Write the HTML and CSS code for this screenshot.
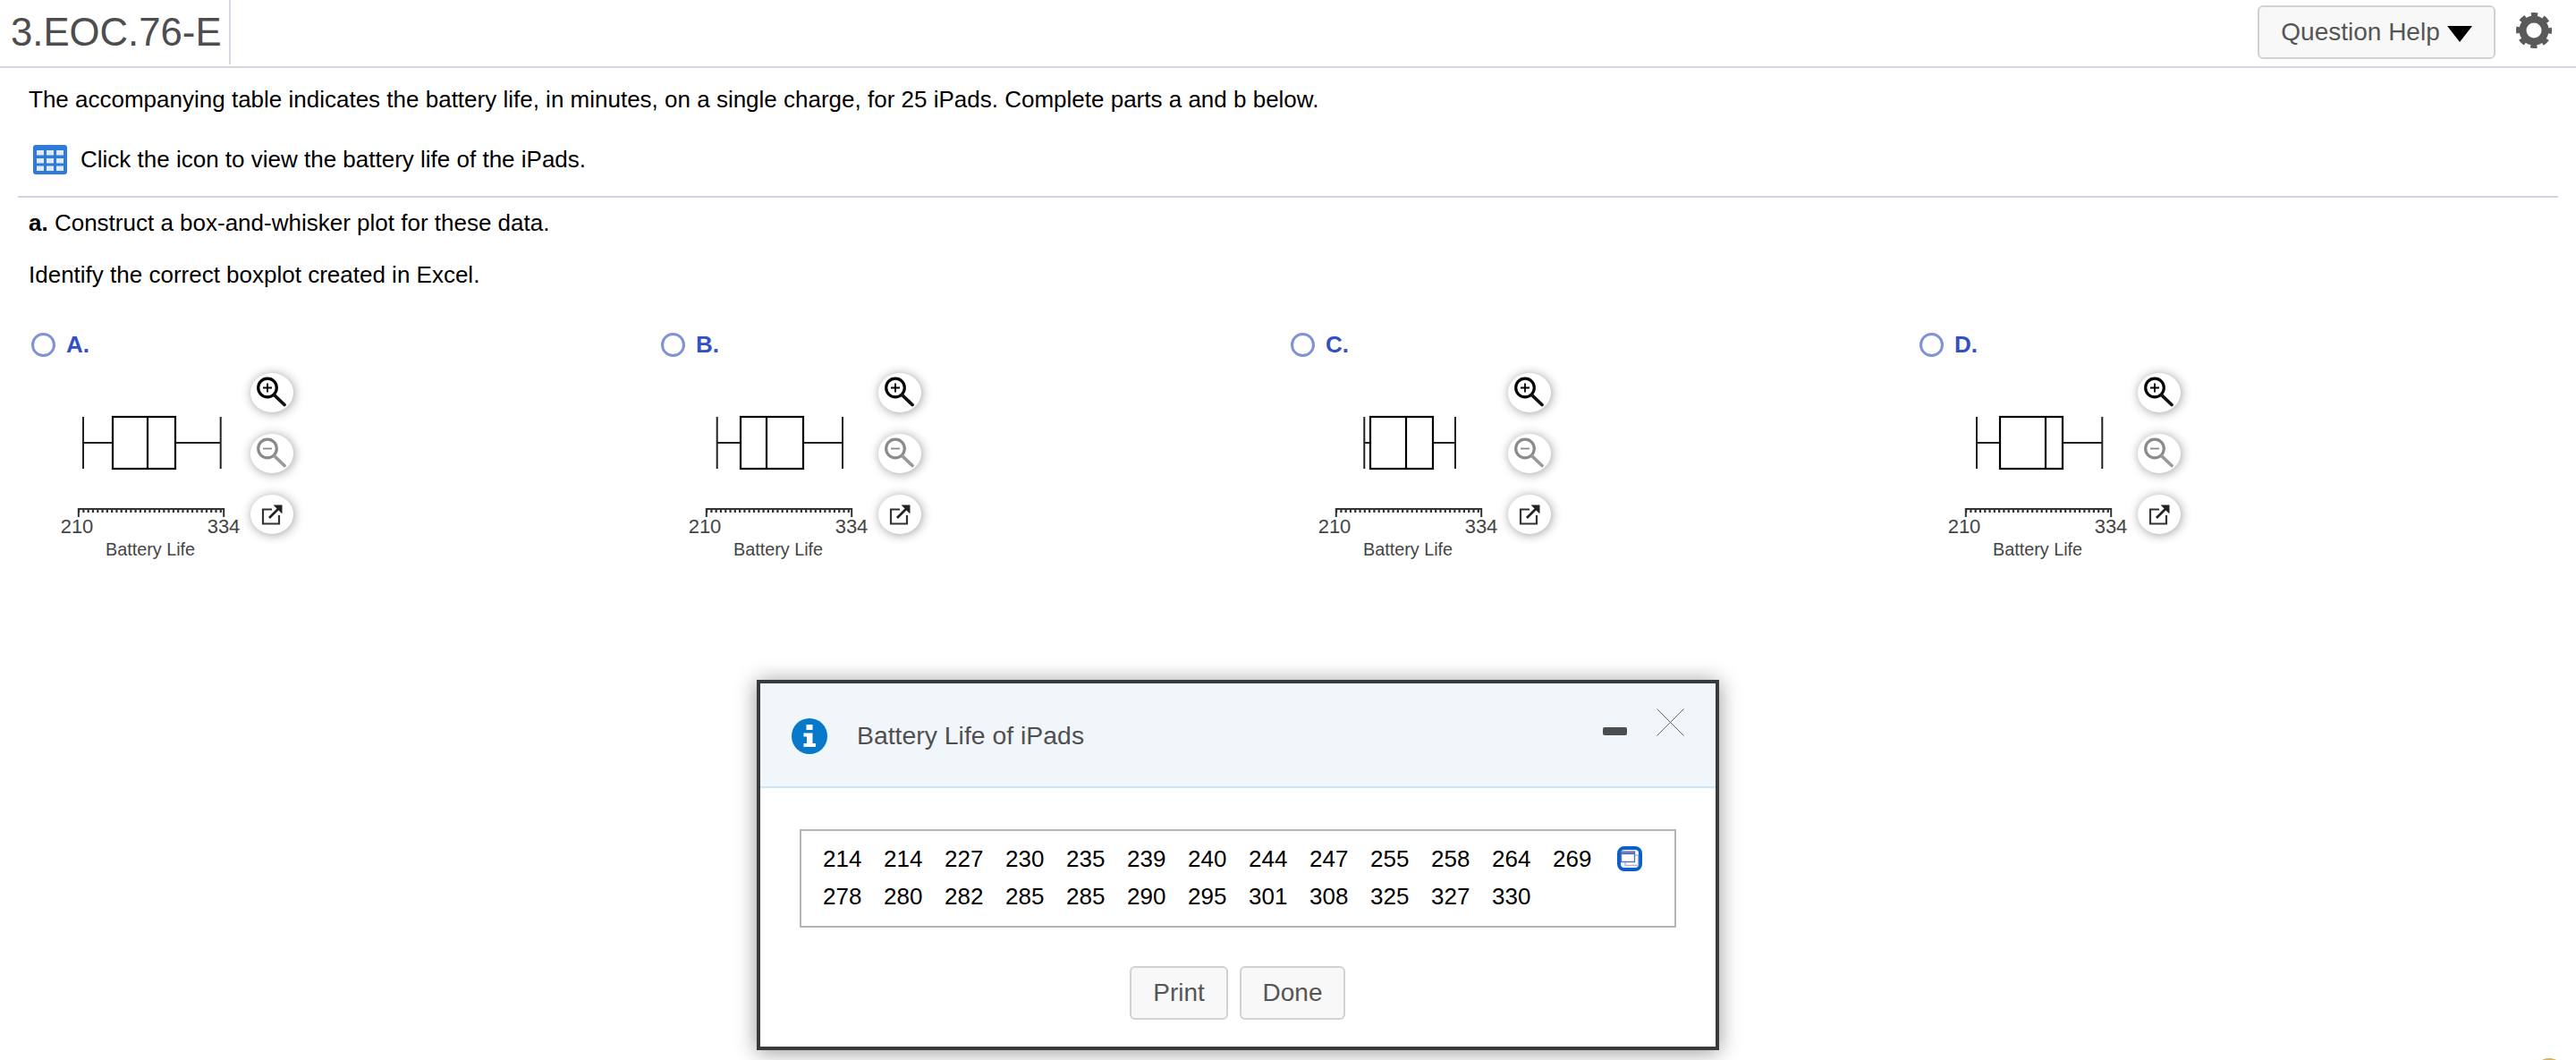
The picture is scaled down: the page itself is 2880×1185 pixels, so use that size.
FILE: index.html
```html
<!DOCTYPE html>
<html lang="en">
<head>
<meta charset="utf-8">
<title>3.EOC.76-E</title>
<link rel="stylesheet" href="styles.css">
</head>
<body>
<svg class="defs" width="0" height="0" aria-hidden="true">
  <defs>
    <g id="axis">
      <path class="ax" d="M27 152H191M27.800 151V161M190.200 151V161"/>
      <line class="ticks" x1="27" y1="153.500" x2="191" y2="153.500"/>
    </g>
    <symbol id="zoom-in" viewBox="0 0 48 44">
      <circle cx="19" cy="16.500" r="10.300" fill="none" stroke="#000" stroke-width="3.200"/>
      <path d="M14 16.500H24M19 11.500V21.500" stroke="#000" stroke-width="1.800" fill="none"/>
      <path d="M27 25L38 35.500" stroke="#111" stroke-width="3.800" stroke-linecap="round"/>
    </symbol>
    <symbol id="zoom-out" viewBox="0 0 48 44">
      <circle cx="19" cy="16.500" r="10.300" fill="none" stroke="#8a8a8a" stroke-width="3.200"/>
      <path d="M14 16.500H24" stroke="#8a8a8a" stroke-width="1.800" fill="none"/>
      <path d="M27 25L38 35.500" stroke="#9a9a9a" stroke-width="3.800" stroke-linecap="round"/>
    </symbol>
    <symbol id="popout" viewBox="0 0 48 44">
      <path d="M24 16.500H14V32.500H32V23" fill="none" stroke="#333" stroke-width="2.200"/>
      <path d="M21 26L32 15" stroke="#222" stroke-width="2.600" fill="none"/>
      <path d="M25.500 11.500H35.500V21.500Z" fill="#222"/>
    </symbol>
  </defs>
</svg>

<div class="page">
  <header class="topbar">
    <h1 class="title">3.EOC.76-E</h1>
    <div class="top-actions">
      <button class="btn help-btn" type="button">Question Help <span class="caret"></span></button>
      <svg class="gear" width="40" height="40" viewBox="0 0 40 40" aria-hidden="true">
        <circle cx="20" cy="20" r="12.500" fill="none" stroke="#5a5a5a" stroke-width="8"/>
        <circle cx="20" cy="20" r="17" fill="none" stroke="#5a5a5a" stroke-width="6" stroke-dasharray="7 6.350" stroke-dashoffset="3.500"/>
      </svg>
    </div>
  </header>

  <main class="content">
    <p class="intro">The accompanying table indicates the battery life, in minutes, on a single charge, for 25 iPads. Complete parts a and b below.</p>
    <p class="data-line">
      <svg class="grid-icon" width="38" height="33" viewBox="0 0 38 33" aria-hidden="true">
        <rect width="38" height="33" rx="3" fill="#2f7bd9"/>
        <g fill="#dfeafa">
          <rect x="4" y="6" width="8" height="5.500"/><rect x="15" y="6" width="8" height="5.500"/><rect x="26" y="6" width="8" height="5.500"/>
          <rect x="4" y="15" width="8" height="5.500"/><rect x="15" y="15" width="8" height="5.500"/><rect x="26" y="15" width="8" height="5.500"/>
          <rect x="4" y="23.500" width="8" height="5.500"/><rect x="15" y="23.500" width="8" height="5.500"/><rect x="26" y="23.500" width="8" height="5.500"/>
        </g>
      </svg>
      <span>Click the icon to view the battery life of the iPads.</span>
    </p>
    <hr class="rule">
    <p class="part"><b>a.</b> Construct a box-and-whisker plot for these data.</p>
    <p class="prompt">Identify the correct boxplot created in Excel.</p>

    <div class="options">
      <section class="option option-a">
        <label class="choice"><span class="radio"></span><span class="letter">A.</span></label>
        <div class="figure">
          <svg class="plot" width="220" height="208" viewBox="0 0 220 208" aria-label="Boxplot A">
            <path class="whisker" d="M33 49V107M186.700 49V107M33 78H66M136 78H186.700"/>
            <rect class="box" x="66" y="49" width="70" height="58"/>
            <line class="median" x1="105" y1="49" x2="105" y2="107"/>
            <use href="#axis"/>
            <text class="tick-label" x="26" y="179" text-anchor="middle">210</text>
            <text class="tick-label" x="190" y="179" text-anchor="middle">334</text>
            <text class="axis-title" x="108" y="204" text-anchor="middle">Battery Life</text>
          </svg>
          <div class="tools">
            <span class="tool"><svg width="48" height="44"><use href="#zoom-in"/></svg></span>
            <span class="tool"><svg width="48" height="44"><use href="#zoom-out"/></svg></span>
            <span class="tool"><svg width="48" height="44"><use href="#popout"/></svg></span>
          </div>
        </div>
      </section>
      <section class="option option-b">
        <label class="choice"><span class="radio"></span><span class="letter">B.</span></label>
        <div class="figure">
          <svg class="plot" width="220" height="208" viewBox="0 0 220 208" aria-label="Boxplot B">
            <path class="whisker" d="M39.700 49V107M180 49V107M39.700 78H66M136 78H180"/>
            <rect class="box" x="66" y="49" width="70" height="58"/>
            <line class="median" x1="95" y1="49" x2="95" y2="107"/>
            <use href="#axis"/>
            <text class="tick-label" x="26" y="179" text-anchor="middle">210</text>
            <text class="tick-label" x="190" y="179" text-anchor="middle">334</text>
            <text class="axis-title" x="108" y="204" text-anchor="middle">Battery Life</text>
          </svg>
          <div class="tools">
            <span class="tool"><svg width="48" height="44"><use href="#zoom-in"/></svg></span>
            <span class="tool"><svg width="48" height="44"><use href="#zoom-out"/></svg></span>
            <span class="tool"><svg width="48" height="44"><use href="#popout"/></svg></span>
          </div>
        </div>
      </section>
      <section class="option option-c">
        <label class="choice"><span class="radio"></span><span class="letter">C.</span></label>
        <div class="figure">
          <svg class="plot" width="220" height="208" viewBox="0 0 220 208" aria-label="Boxplot C">
            <path class="whisker" d="M59.300 49V107M161 49V107M59.300 78H66M136 78H161"/>
            <rect class="box" x="66" y="49" width="70" height="58"/>
            <line class="median" x1="106" y1="49" x2="106" y2="107"/>
            <use href="#axis"/>
            <text class="tick-label" x="26" y="179" text-anchor="middle">210</text>
            <text class="tick-label" x="190" y="179" text-anchor="middle">334</text>
            <text class="axis-title" x="108" y="204" text-anchor="middle">Battery Life</text>
          </svg>
          <div class="tools">
            <span class="tool"><svg width="48" height="44"><use href="#zoom-in"/></svg></span>
            <span class="tool"><svg width="48" height="44"><use href="#zoom-out"/></svg></span>
            <span class="tool"><svg width="48" height="44"><use href="#popout"/></svg></span>
          </div>
        </div>
      </section>
      <section class="option option-d">
        <label class="choice"><span class="radio"></span><span class="letter">D.</span></label>
        <div class="figure">
          <svg class="plot" width="220" height="208" viewBox="0 0 220 208" aria-label="Boxplot D">
            <path class="whisker" d="M40 49V107M180.300 49V107M40 78H66M136 78H180.300"/>
            <rect class="box" x="66" y="49" width="70" height="58"/>
            <line class="median" x1="117" y1="49" x2="117" y2="107"/>
            <use href="#axis"/>
            <text class="tick-label" x="26" y="179" text-anchor="middle">210</text>
            <text class="tick-label" x="190" y="179" text-anchor="middle">334</text>
            <text class="axis-title" x="108" y="204" text-anchor="middle">Battery Life</text>
          </svg>
          <div class="tools">
            <span class="tool"><svg width="48" height="44"><use href="#zoom-in"/></svg></span>
            <span class="tool"><svg width="48" height="44"><use href="#zoom-out"/></svg></span>
            <span class="tool"><svg width="48" height="44"><use href="#popout"/></svg></span>
          </div>
        </div>
      </section>
    </div>
  </main>

  <div class="modal" role="dialog" aria-label="Battery Life of iPads">
    <div class="modal-head">
      <svg class="info" width="40" height="40" viewBox="0 0 40 40" aria-hidden="true">
        <circle cx="20" cy="20" r="20" fill="#0778ca"/>
        <rect x="16.500" y="7" width="7" height="6" fill="#fff"/>
        <path d="M13.500 16.500H23.500V28H27V32H13.500V28H17V20.500H13.500Z" fill="#fff"/>
      </svg>
      <h2 class="modal-title">Battery Life of iPads</h2>
      <span class="minimize"></span>
      <svg class="close" width="31" height="31" viewBox="0 0 31 31" aria-hidden="true">
        <path d="M.5.5L30.500 30.500M30.500.5L.5 30.500" stroke="#666" stroke-width="1" fill="none"/>
      </svg>
    </div>
    <div class="modal-body">
      <div class="data-box">
        <span>214</span><span>214</span><span>227</span><span>230</span><span>235</span><span>239</span><span>240</span><span>244</span><span>247</span><span>255</span><span>258</span><span>264</span><span>269</span>
        <svg class="copy" width="28" height="28" viewBox="0 0 28 28" aria-hidden="true">
          <rect x="2" y="2" width="24" height="24" rx="6" fill="#fff" stroke="#0a5fc8" stroke-width="4"/>
          <rect x="4.500" y="6" width="15" height="11.500" fill="none" stroke="#5a6fb8" stroke-width="1.400"/>
          <path d="M4.500 8H19.500" stroke="#5a6fb8" stroke-width="2.400"/>
          <path d="M20 10H23.500V21.500H9V18" fill="none" stroke="#aab8de" stroke-width="1.400"/>
        </svg>
        <span>278</span><span>280</span><span>282</span><span>285</span><span>285</span><span>290</span><span>295</span><span>301</span><span>308</span><span>325</span><span>327</span><span>330</span>
      </div>
      <div class="modal-actions">
        <button class="btn print-btn" type="button">Print</button>
        <button class="btn done-btn" type="button">Done</button>
      </div>
    </div>
  </div>
  <span class="corner-spot"></span>
</div>
</body>
</html>
```

FILE: styles.css
```css
* { box-sizing: border-box; }
html, body { margin: 0; padding: 0; background: #fff; }
body {
  font-family: "Liberation Sans", Arial, sans-serif;
  font-size: 26px;
  color: #000;
  overflow: hidden;
}
.defs { position: absolute; }
.page { position: relative; width: 2880px; height: 1185px; overflow: hidden; }

.topbar {
  height: 76px;
  border-bottom: 2px solid #d0d4e3;
  display: flex;
  justify-content: space-between;
  align-items: flex-start;
  padding-right: 27px;
}
.title {
  margin: 0;
  width: 258px;
  height: 72px;
  padding-left: 12px;
  border-right: 2px solid #d6d9e4;
  font-size: 43.700px;
  font-weight: 400;
  line-height: 72px;
  color: #4d4d4d;
  white-space: nowrap;
}
.top-actions { display: flex; align-items: flex-start; gap: 23px; padding-top: 6px; }
.btn {
  font-family: inherit;
  background: #f8f8f8;
  border: 2px solid #d2d2d2;
  border-radius: 6px;
  color: #555;
  padding: 0;
}
.help-btn {
  width: 266px;
  height: 60px;
  font-size: 28px;
  display: flex;
  align-items: center;
  justify-content: center;
  gap: 8px;
}
.caret {
  width: 0;
  height: 0;
  border-left: 14px solid transparent;
  border-right: 14px solid transparent;
  border-top: 18px solid #000;
  margin-top: 3px;
}
.gear { margin-top: 8px; }

.content { padding-left: 32px; }
.content p { margin: 0; line-height: 36px; }
.content .intro { padding-top: 17px; }
.content .data-line { display: flex; align-items: center; gap: 15px; margin-top: 31px; padding-left: 5px; }
.rule {
  width: 2840px;
  margin: 23px 0 0 -12px;
  border: 0;
  border-top: 2px solid #d0d4e3;
}
.content .part { margin-top: 10px; }
.content .prompt { margin-top: 22px; }

.options {
  display: grid;
  grid-template-columns: 704px 704px 703px 703px;
  margin-top: 46px;
}
.choice { display: flex; align-items: center; height: 28px; padding-left: 3px; gap: 12px; }
.radio {
  width: 27px;
  height: 27px;
  border: 3px solid #8093d9;
  border-radius: 50%;
  background: #fff;
}
.letter { font-weight: 700; color: #3350c4; }
.figure { display: flex; align-items: flex-start; margin-top: 18px; }
.plot { margin-left: 28px; flex: none; display: block; }
.option-b .plot, .option-c .plot { margin-left: 26px; }
.option-d .plot { margin-left: 27px; }
.whisker { fill: none; stroke: #222; stroke-width: 2; }
.box { fill: #fff; stroke: #000; stroke-width: 2.200; }
.median { stroke: #000; stroke-width: 2.200; }
.ax { fill: none; stroke: #333; stroke-width: 2; }
.ticks { stroke: #333; stroke-width: 5; stroke-dasharray: 2.200 3.090; }
.tick-label { font-size: 22px; fill: #444; }
.axis-title { font-size: 19.800px; fill: #444; }
.tools { display: flex; flex-direction: column; gap: 24px; }
.tool {
  display: block;
  width: 48px;
  height: 44px;
  border-radius: 50%;
  background: #fff;
  box-shadow: 1px 1px 12px rgba(0, 0, 0, .38);
}
.tool svg { display: block; }

.modal {
  position: absolute;
  left: 846px;
  top: 760px;
  width: 1076px;
  height: 414px;
  border: 4px solid #3a3a3a;
  background: #fff;
  box-shadow: 0 2px 22px rgba(0, 0, 0, .42);
}
.modal-head {
  height: 117px;
  background: #f1f6fa;
  border-bottom: 2px solid #cae4f8;
  position: relative;
  display: flex;
  align-items: flex-start;
  padding-left: 35px;
}
.info { margin-top: 39px; flex: none; }
.modal-title {
  margin: 38px 0 0 33px;
  font-size: 28.400px;
  font-weight: 400;
  line-height: 40px;
  color: #505050;
}
.minimize {
  position: absolute;
  left: 942px;
  top: 49px;
  width: 27px;
  height: 9px;
  border-radius: 2px;
  background: #4d4d4d;
}
.close { position: absolute; left: 1002px; top: 28px; }
.modal-body { padding: 46px 44px 0; }
.data-box {
  width: 980px;
  height: 110px;
  border: 2px solid #b5b5b5;
  padding: 10px 0 0 24px;
  display: grid;
  grid-template-columns: repeat(14, 68px);
  grid-auto-rows: 42px;
  align-items: center;
  line-height: 42px;
}
.copy { margin-left: 4px; }
.modal-actions { display: flex; justify-content: center; gap: 13px; margin-top: 43px; padding-right: 1px; }
.print-btn, .done-btn { height: 60px; font-size: 28px; }
.print-btn { width: 110px; }
.done-btn { width: 118px; }

.corner-spot {
  position: absolute;
  left: 2833px;
  top: 1183px;
  width: 34px;
  height: 34px;
  border-radius: 50%;
  background: #d8b35a;
}
```
